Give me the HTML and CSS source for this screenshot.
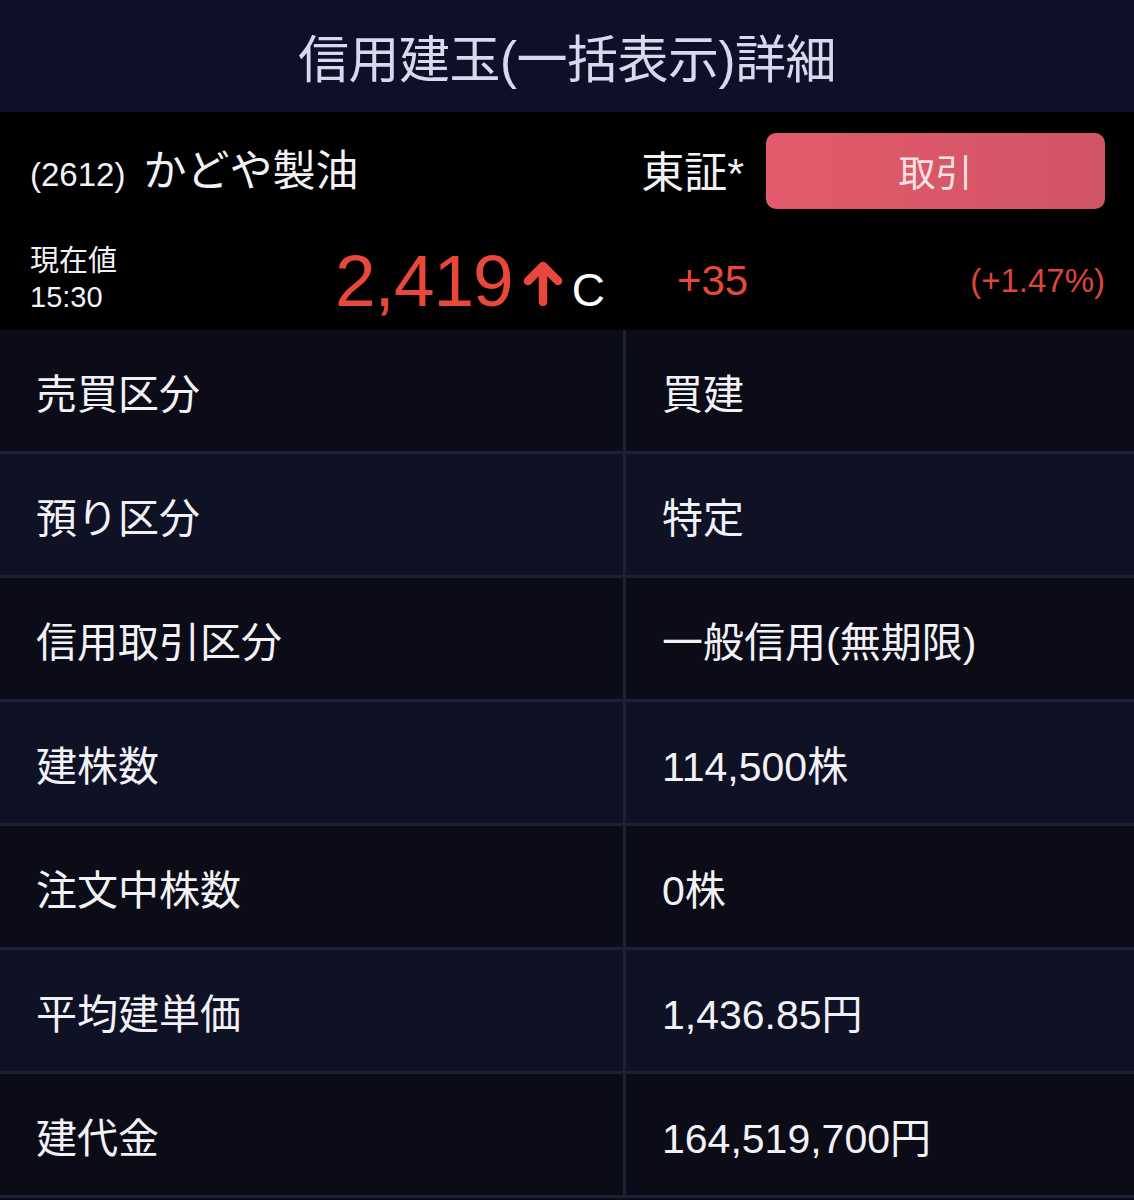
FILE: index.html
```html
<!DOCTYPE html>
<html lang="ja">
<head>
    <meta charset="UTF-8">
    <meta name="viewport" content="width=device-width, initial-scale=1.0">
    <title>信用建玉(一括表示)詳細</title>
    <link rel="stylesheet" href="styles.css">
</head>
<body>

    <div class="header">
        <h1>信用建玉(一括表示)詳細</h1>
    </div>

    <div class="quote">
        <div class="quote-top">
            <div class="stock">
                <span class="code">(2612)</span>
                <span class="name">かどや製油</span>
            </div>
            <div class="market">東証*</div>
            <button class="trade">取引</button>
        </div>
        <div class="quote-bottom">
            <div class="now">
                <span>現在値</span>
                <span class="time">15:30</span>
            </div>
            <div class="price">
                <span class="price-num">2,419</span>
                <svg class="arrow" viewBox="0 0 48 48" width="48" height="48">
                    <path d="M24 44 V9 M9 23 L24 8 L39 23" fill="none" stroke="#e8483a" stroke-width="8.5" stroke-linecap="round" stroke-linejoin="round"/>
                </svg>
                <span class="flag">C</span>
            </div>
            <div class="change">+35</div>
            <div class="pct">(+1.47%)</div>
        </div>
    </div>

    <div class="detail">
        <div class="row">
            <div class="label">売買区分</div>
            <div class="value">買建</div>
        </div>
        <div class="row">
            <div class="label">預り区分</div>
            <div class="value">特定</div>
        </div>
        <div class="row">
            <div class="label">信用取引区分</div>
            <div class="value">一般信用(無期限)</div>
        </div>
        <div class="row">
            <div class="label">建株数</div>
            <div class="value">114,500株</div>
        </div>
        <div class="row">
            <div class="label">注文中株数</div>
            <div class="value">0株</div>
        </div>
        <div class="row">
            <div class="label">平均建単価</div>
            <div class="value">1,436.85円</div>
        </div>
        <div class="row">
            <div class="label">建代金</div>
            <div class="value">164,519,700円</div>
        </div>
    </div>

</body>
</html>
```

FILE: styles.css
```css
body {
    margin: 0;
    background-color: #0b0c18;
    color: #f2f2f6;
    font-family: 'Liberation Sans', 'Noto Sans CJK JP', sans-serif;
}
.header {
    height: 112px;
    background-color: #0e1029;
    display: flex;
    align-items: center;
    justify-content: center;
}
.header h1 {
    margin: 0;
    font-size: 51px;
    font-weight: normal;
    color: #d9d8ec;
    letter-spacing: -0.5px;
}
.quote {
    background-color: #000;
}
.quote-top {
    height: 118px;
    display: flex;
    align-items: center;
    padding: 0 29px 0 30px;
}
.stock {
    display: flex;
    align-items: baseline;
    gap: 18px;
    margin-top: -8px;
}
.code {
    font-size: 33px;
}
.name {
    font-size: 43px;
}
.market {
    margin-left: auto;
    font-size: 43px;
    margin-top: -4px;
}
.trade {
    margin-left: 22px;
    width: 339px;
    height: 76px;
    border: none;
    border-radius: 10px;
    background: linear-gradient(90deg, #e25a6b, #d05565);
    color: #f6e2e4;
    font-family: inherit;
    font-size: 37px;
    cursor: pointer;
}
.quote-bottom {
    height: 100px;
    display: flex;
    align-items: center;
    padding: 0 29px 0 30px;
}
.now {
    width: 305px;
    display: flex;
    flex-direction: column;
    font-size: 29px;
    line-height: 36px;
    margin-top: -2px;
}
.time {
    font-size: 29px;
}
.price {
    display: flex;
    align-items: baseline;
}
.price-num {
    font-size: 73px;
    color: #e8483a;
    letter-spacing: -1px;
}
.arrow {
    margin-left: 6px;
    align-self: center;
    margin-top: 4px;
}
.flag {
    margin-left: 5px;
    font-size: 46px;
    color: #fff;
}
.change {
    margin-left: 72px;
    font-size: 42px;
    color: #e8483a;
    margin-top: 2px;
}
.pct {
    margin-left: auto;
    font-size: 33px;
    color: #d9473a;
    margin-top: 2px;
}
.row {
    display: flex;
    height: 121px;
    border-bottom: 3px solid #1e2037;
    background-color: #0b0c18;
}
.row:nth-child(even) {
    background-color: #0f1125;
}
.label {
    width: 626px;
    border-right: 3px solid #1e2037;
    display: flex;
    align-items: center;
    padding-left: 36px;
    font-size: 41px;
    box-sizing: border-box;
}
.value {
    display: flex;
    align-items: center;
    padding-left: 36px;
    font-size: 41px;
}
```
